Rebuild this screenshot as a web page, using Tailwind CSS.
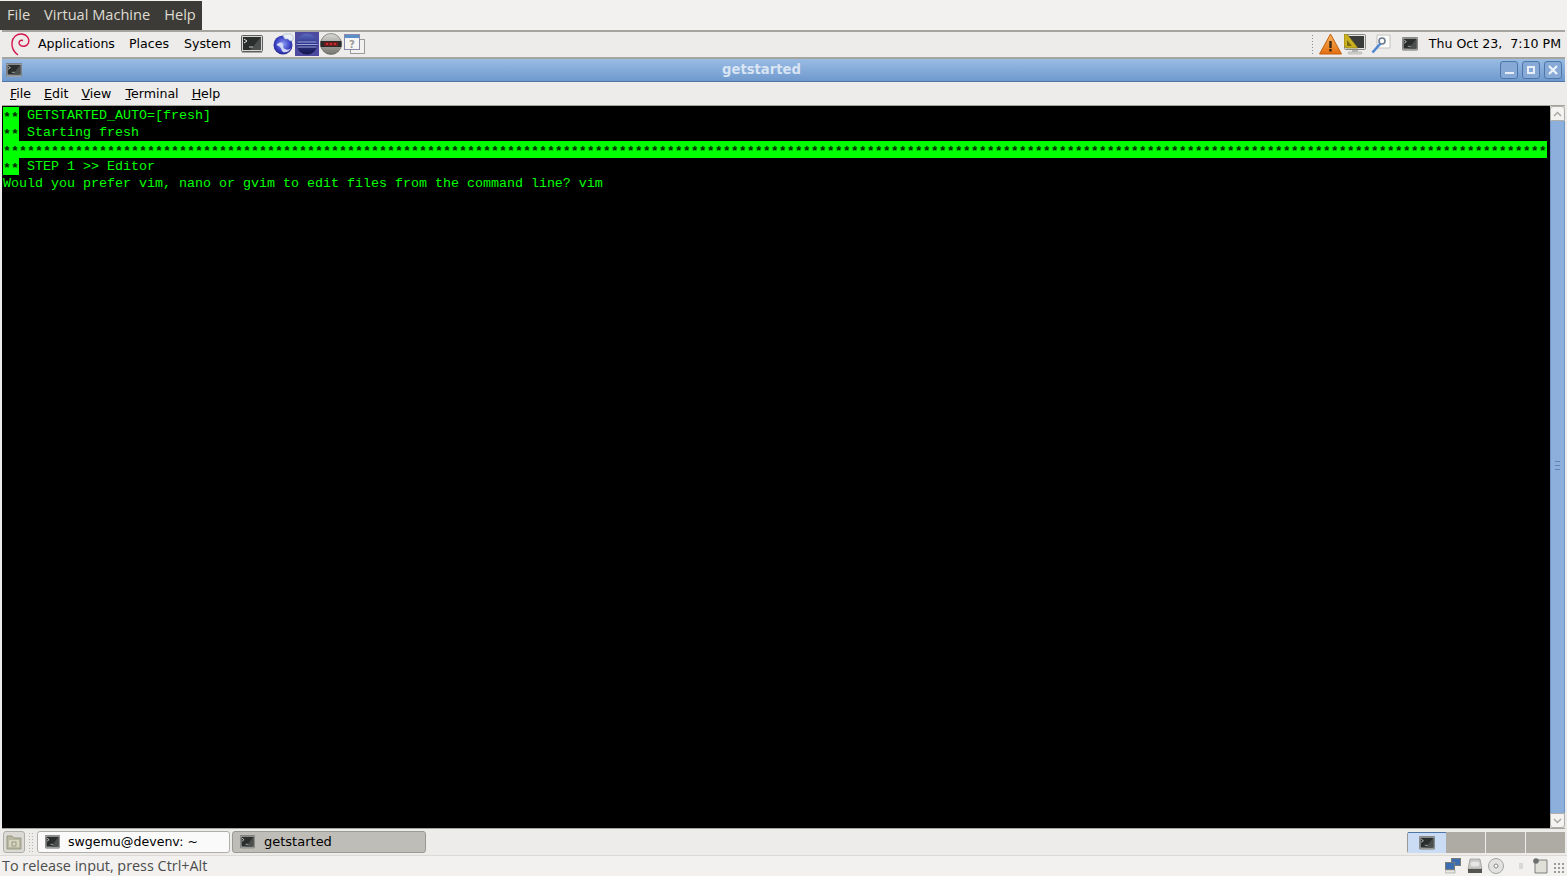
<!DOCTYPE html>
<html lang="en">
<head>
    <meta charset="UTF-8">
    <title>getstarted</title>
    <script src="https://cdn.jsdelivr.net/npm/@tailwindcss/browser@4"></script>
</head>
<body class="bg-[#edecea] overflow-hidden">
    <!-- shared icons -->
    <svg class="hidden">
        <symbol id="term" viewBox="0 0 22 18">
            <rect x="0.5" y="0.5" width="21" height="16" rx="1" fill="#d6d6d2" stroke="#5c5e5e"/>
            <rect x="2" y="2" width="18" height="13" fill="#2a2f2e"/>
            <path d="M9 15L20 2v13z" fill="#4b504f"/>
            <path d="M3 4l3 2-3 2" fill="none" stroke="#e4e4e4" stroke-width="1"/>
            <path d="M8 12h4" stroke="#c8c8c8" stroke-width="1"/>
            <rect x="1" y="17" width="20" height="1" fill="#a5a5a0"/>
        </symbol>
    </svg>

    <div class="w-[1567px] h-[876px] flex flex-col font-['DejaVu_Sans',sans-serif] text-[12.6px] text-black">
        <!-- vmware menu -->
        <div class="h-[30px] bg-[#f2f1f0] flex shrink-0">
            <div class="w-[202px] h-[29px] mt-px pb-[2px] bg-[#3c3b37] text-[#dfdbd2] font-['Open_Sans',sans-serif] text-[14.6px] flex items-center gap-[14px] pl-[7px]">
                <span>File</span>
                <span>Virtual Machine</span>
                <span>Help</span>
            </div>
        </div>

        <div class="flex-1 flex flex-col mx-[2px] min-h-0 border-t-2 border-[#a5a5a0]">
            <!-- gnome panel -->
            <div class="h-[25px] shrink-0 bg-[#edecea] flex items-center pb-px">
                <svg class="ml-[8px] w-[21px] h-[24px]" viewBox="0 0 21 24" fill="none">
                    <path d="M8 23C4 20 1.500 15.500 2 10.500C2.500 5 7 1.500 12 2C17 2.500 20 7 18.500 11C17 14.500 12 15.500 9.500 12.500C8 10 10 7.500 13 8.500" stroke="#d5144f" stroke-width="1.400"/>
                </svg>
                <span class="ml-[7px]">Applications</span>
                <span class="ml-[14px]">Places</span>
                <span class="ml-[15px]">System</span>
                <svg class="ml-[10px] w-[22px] h-[18px]"><use href="#term"/></svg>
                <!-- web browser -->
                <svg class="ml-[10px] w-[21px] h-[22px]" viewBox="0 0 21 22">
                    <defs>
                        <radialGradient id="globe" cx="0.5" cy="0.45" r="0.6"><stop offset="0" stop-color="#8c9cf0"/><stop offset="0.6" stop-color="#3f46c8"/><stop offset="1" stop-color="#1d1f80"/></radialGradient>
                    </defs>
                    <circle cx="10" cy="12" r="9.500" fill="url(#globe)"/>
                    <path d="M4 11c3-2 5-2 6 0s-1 4 2 5 4 1 6-1c-2 4-5 5-8 4-2-2-1-3-3-5S3 13 4 11z" fill="#cfd6f6"/>
                    <path d="M11 1h7l2 2v4l-3 1-2-2h-3l-2-3z" fill="#e9edf5" stroke="#9fb2cc" stroke-width="0.600"/>
                </svg>
                <!-- eclipse -->
                <div class="ml-px w-[24px] h-[24px] bg-[#4c4ba0] flex items-center justify-center">
                    <svg class="w-[22px] h-[22px]" viewBox="0 0 22 22">
                        <defs>
                            <linearGradient id="ecl" x1="0" y1="0" x2="0" y2="1"><stop offset="0" stop-color="#5c6cc0"/><stop offset="0.5" stop-color="#2c3288"/><stop offset="1" stop-color="#15174a"/></linearGradient>
                        </defs>
                        <circle cx="11" cy="11" r="10.500" fill="url(#ecl)"/>
                        <path d="M1.500 9h19M0.500 11.500h21M1.500 14h19" stroke="#aab2e4" stroke-width="0.900"/>
                    </svg>
                </div>
                <!-- round grey launcher -->
                <svg class="ml-px w-[22px] h-[22px]" viewBox="0 0 22 22">
                    <defs>
                        <linearGradient id="grey" x1="0" y1="0" x2="0" y2="1"><stop offset="0" stop-color="#d8d8d4"/><stop offset="1" stop-color="#75756f"/></linearGradient>
                    </defs>
                    <circle cx="11" cy="11" r="10.500" fill="url(#grey)" stroke="#5a5a56" stroke-width="0.600"/>
                    <rect x="0.500" y="8" width="21" height="6" fill="#2a2a2a"/>
                    <rect x="4" y="9" width="14" height="4" fill="#6e1a1e"/>
                    <path d="M6 11h2M10 11h2M14 11h2" stroke="#e83030" stroke-width="1.600"/>
                </svg>
                <!-- help window -->
                <svg class="ml-[2px] w-[21px] h-[21px]" viewBox="0 0 21 21">
                    <rect x="6.500" y="5.500" width="14" height="14" fill="#f1f1ef" stroke="#9a9a98"/>
                    <rect x="0.500" y="0.500" width="15" height="15" fill="#f5f5f3" stroke="#88a"/>
                    <rect x="1" y="1" width="14" height="3" fill="#5b8fcb"/>
                    <text x="8" y="13.500" text-anchor="middle" font-size="10" font-weight="700" font-family="DejaVu Sans" fill="#9a9a98">?</text>
                </svg>

                <div class="ml-auto flex items-center">
                    <div class="w-[4px] h-[20px] mr-[4px] bg-[radial-gradient(#8f8f8a_1px,transparent_1px)] bg-[length:3px_3px]"></div>
                    <svg class="w-[23px] h-[22px]" viewBox="0 0 23 22">
                        <defs>
                            <linearGradient id="warn" x1="0" y1="0" x2="0" y2="1"><stop offset="0" stop-color="#f8b35c"/><stop offset="1" stop-color="#e56f10"/></linearGradient>
                        </defs>
                        <path d="M11.500 1L22.500 21H0.500z" fill="url(#warn)" stroke="#c25f10" stroke-linejoin="round"/>
                        <rect x="10.300" y="8" width="2.400" height="7" fill="#3c2a14"/>
                        <rect x="10.300" y="16" width="2.400" height="2.500" fill="#3c2a14"/>
                    </svg>
                    <svg class="ml-[2px] w-[22px] h-[21px]" viewBox="0 0 22 21">
                        <rect x="0.500" y="0.500" width="21" height="15" rx="1" fill="#e4e4e2" stroke="#8a8a88"/>
                        <rect x="2" y="2" width="18" height="12" fill="#3a3c3c"/>
                        <path d="M0 0h3l11 14H2v-1H0z" fill="#cbb020" stroke="#7a6a10" stroke-width="0.600"/>
                        <path d="M3 6l5 6H3z" fill="#7a6a10"/>
                        <rect x="8" y="16" width="6" height="2" fill="#b9b9b6"/>
                        <rect x="4" y="18" width="14" height="2" rx="1" fill="#d8d8d5" stroke="#9a9a98" stroke-width="0.500"/>
                    </svg>
                    <svg class="ml-[5px] w-[20px] h-[20px]" viewBox="0 0 20 20">
                        <path d="M6 1h13v13H6z" fill="#fbfbfa" stroke="#b8b8b4" stroke-width="0.800"/>
                        <circle cx="11" cy="7" r="3" fill="none" stroke="#6b7c90" stroke-width="1.600"/>
                        <path d="M9.500 9.500L1.500 18.500" stroke="#4f86d0" stroke-width="2.600"/>
                    </svg>
                    <svg class="ml-[11px] w-[16px] h-[14px]" viewBox="0 0 22 18" preserveAspectRatio="none"><use href="#term"/></svg>
                    <span class="ml-[11px] mr-[4px] whitespace-pre">Thu Oct 23,  7:10 PM</span>
                </div>
            </div>

            <!-- title bar -->
            <div class="h-[25px] shrink-0 border-t-2 border-[#a5a5a0] bg-gradient-to-b from-[#9abce4] to-[#6f99cd] border-b border-b-[#4f76a8] flex items-center relative">
                <svg class="ml-[4px] w-[16px] h-[14px]" viewBox="0 0 22 18" preserveAspectRatio="none"><use href="#term"/></svg>
                <span class="absolute inset-x-0 text-center pr-[44px] text-[13.2px] font-bold text-[#d8e4f3]">getstarted</span>
                <div class="ml-auto mr-[3px] flex gap-[4px] relative">
                    <div class="w-[18px] h-[18px] rounded-[3px] border border-[#4f76a8] bg-[#86a9d6] flex items-end justify-center pb-[4px]"><div class="w-[9px] h-[2px] bg-[#e8eff8]"></div></div>
                    <div class="w-[18px] h-[18px] rounded-[3px] border border-[#4f76a8] bg-[#86a9d6] flex items-center justify-center"><div class="w-[8px] h-[8px] border-2 border-[#e8eff8]"></div></div>
                    <div class="w-[18px] h-[18px] rounded-[3px] border border-[#4f76a8] bg-[#86a9d6] flex items-center justify-center">
                        <svg class="w-[10px] h-[10px]" viewBox="0 0 10 10"><path d="M1 1l8 8M9 1l-8 8" stroke="#eef3fa" stroke-width="2.200"/></svg>
                    </div>
                </div>
            </div>

            <!-- terminal menu -->
            <div class="h-[24px] shrink-0 bg-[#edecea] flex items-center gap-[13px] pl-[8px] pt-px border-b border-[#a5a5a0]">
                <span><u>F</u>ile</span>
                <span><u>E</u>dit</span>
                <span><u>V</u>iew</span>
                <span class="ml-px"><u>T</u>erminal</span>
                <span><u>H</u>elp</span>
            </div>

            <!-- terminal -->
            <div class="flex-1 min-h-0 flex bg-black">
                <div class="flex-1 pl-px pt-px font-['Liberation_Mono',monospace] text-[13.33px] leading-[17px] text-[#00ff00] overflow-hidden">
                    <div class="h-[17px] whitespace-pre"><span class="inline-block h-[17px] bg-[#00ff00] text-[#002800] font-bold"><span class="relative top-[2px]">**</span></span> GETSTARTED_AUTO=[fresh]</div>
                    <div class="h-[17px] whitespace-pre"><span class="inline-block h-[17px] bg-[#00ff00] text-[#002800] font-bold"><span class="relative top-[2px]">**</span></span> Starting fresh</div>
                    <div class="h-[17px] whitespace-pre w-[1544px] bg-[#00ff00] text-[#002800] font-bold overflow-hidden"><span class="relative top-[2px]">*************************************************************************************************************************************************************************************************</span></div>
                    <div class="h-[17px] whitespace-pre"><span class="inline-block h-[17px] bg-[#00ff00] text-[#002800] font-bold"><span class="relative top-[2px]">**</span></span> STEP 1 &gt;&gt; Editor</div>
                    <div class="h-[17px] whitespace-pre">Would you prefer vim, nano or gvim to edit files from the command line? vim</div>
                </div>
                <!-- scrollbar -->
                <div class="w-[15px] flex flex-col bg-[#dcdad5]">
                    <div class="h-[15px] shrink-0 rounded-t-[3px] border border-[#b0aea8] bg-[#f4f3f1] flex items-center justify-center">
                        <svg class="w-[9px] h-[6px]" viewBox="0 0 9 6"><path d="M1 5l3.500-3.500L8 5" fill="none" stroke="#a5a5a0" stroke-width="1.400"/></svg>
                    </div>
                    <div class="flex-1 bg-[#8cafdc] border-x border-[#6f93c3] flex flex-col items-center justify-center gap-[3px] pb-[3px]">
                        <div class="w-[5px] h-px bg-[#5f83b5]"></div>
                        <div class="w-[5px] h-px bg-[#5f83b5]"></div>
                        <div class="w-[5px] h-px bg-[#5f83b5]"></div>
                    </div>
                    <div class="h-[15px] shrink-0 rounded-b-[3px] border border-[#b0aea8] bg-[#f4f3f1] flex items-center justify-center">
                        <svg class="w-[9px] h-[6px]" viewBox="0 0 9 6"><path d="M1 1l3.500 3.500L8 1" fill="none" stroke="#a5a5a0" stroke-width="1.400"/></svg>
                    </div>
                </div>
            </div>

            <!-- bottom panel -->
            <div class="h-[27px] shrink-0 bg-[#edecea] border-t border-[#a5a5a0] flex items-center">
                <div class="ml-px w-[22px] h-[22px] rounded-[3px] border border-[#b0aea8] bg-[#dcdad5] flex items-center justify-center">
                    <svg class="w-[16px] h-[15px]" viewBox="0 0 16 15">
                        <path d="M1 1h5l2 2h7v11H1z" fill="#b8b9a0" stroke="#8e8e76" stroke-width="0.800"/>
                        <rect x="3" y="5" width="10" height="7" fill="#d5d5c0"/>
                        <rect x="6" y="7" width="4" height="4" fill="none" stroke="#8e8e76" stroke-width="0.800"/>
                    </svg>
                </div>
                <div class="ml-[3px] w-[5px] h-[20px] bg-[radial-gradient(#b5b5b0_1px,transparent_1px)] bg-[length:3px_3px]"></div>
                <div class="ml-[4px] w-[193px] h-[22px] rounded-[3px] border border-[#b0aea8] bg-[#fafafa] flex items-center pl-[7px]">
                    <svg class="w-[15px] h-[14px]" viewBox="0 0 22 18" preserveAspectRatio="none"><use href="#term"/></svg>
                    <span class="ml-[8px]">swgemu@devenv: ~</span>
                </div>
                <div class="ml-[2px] w-[194px] h-[22px] rounded-[3px] border border-[#9a9a94] bg-[#bfbdb7] flex items-center pl-[7px]">
                    <svg class="w-[15px] h-[14px]" viewBox="0 0 22 18" preserveAspectRatio="none"><use href="#term"/></svg>
                    <span class="ml-[9px] text-[13px]">getstarted</span>
                </div>
                <!-- workspace switcher -->
                <div class="ml-auto w-[158px] h-[21px] flex rounded-[2px] border-l border-[#9a9a94]">
                    <div class="w-[38px] bg-[#c9dcf4] border-t border-[#4f76a8] flex items-center justify-center">
                        <svg class="w-[16px] h-[14px]" viewBox="0 0 22 18" preserveAspectRatio="none"><use href="#term"/></svg>
                    </div>
                    <div class="flex-1 bg-[#aeaba5] border-r border-[#edecea]"></div>
                    <div class="flex-1 bg-[#aeaba5] border-r border-[#edecea]"></div>
                    <div class="flex-1 bg-[#aeaba5]"></div>
                </div>
            </div>

            <!-- vmware status bar -->
            <div class="h-[21px] shrink-0 -mx-[2px] pb-px bg-[#f2f1f0] border-t border-[#dcdad5] flex items-center font-['Open_Sans',sans-serif] text-[14.4px] text-[#4c4c4c] pl-[2px]">
                <span>To release input, press Ctrl+Alt</span>
                <div class="ml-auto flex items-center">
                    <svg class="w-[16px] h-[16px]" viewBox="0 0 16 16">
                        <rect x="6.500" y="0.500" width="9" height="7" fill="#3b6db0" stroke="#7a7a78"/>
                        <rect x="0.500" y="4.500" width="9" height="7" fill="#3b6db0" stroke="#7a7a78"/>
                        <rect x="0" y="12" width="10" height="3" fill="#e8e8e6" stroke="#8a8a88" stroke-width="0.500"/>
                    </svg>
                    <svg class="ml-[6px] w-[16px] h-[16px]" viewBox="0 0 16 16">
                        <path d="M3 1h10l2 10H1z" fill="#c8c8c6" stroke="#8a8a88" stroke-width="0.600"/>
                        <ellipse cx="8" cy="6" rx="4.500" ry="2.500" fill="#e6e6e4"/>
                        <rect x="1" y="11" width="14" height="4" fill="#55554f"/>
                    </svg>
                    <svg class="ml-[5px] w-[16px] h-[16px]" viewBox="0 0 16 16">
                        <circle cx="8" cy="8" r="7.500" fill="#e2e2e0" stroke="#a5a5a2"/>
                        <circle cx="8" cy="8" r="2" fill="#f8f8f6" stroke="#8a8a88"/>
                    </svg>
                    <div class="ml-[15px] w-[4px] h-[6px] bg-[#d8d8d4]"></div>
                    <svg class="ml-[9px] w-[16px] h-[16px]" viewBox="0 0 16 16">
                        <path d="M3 2h12v13H3z" fill="#e0e0d8" stroke="#666" stroke-width="0.800"/>
                        <circle cx="4" cy="3" r="2.800" fill="#6b6f6e"/>
                    </svg>
                    <div class="ml-[5px] mr-[2px] w-[12px] h-[12px] self-end bg-[radial-gradient(#9a9a96_1px,transparent_1px)] bg-[length:4px_4px]"></div>
                </div>
            </div>
        </div>
    </div>
</body>
</html>
